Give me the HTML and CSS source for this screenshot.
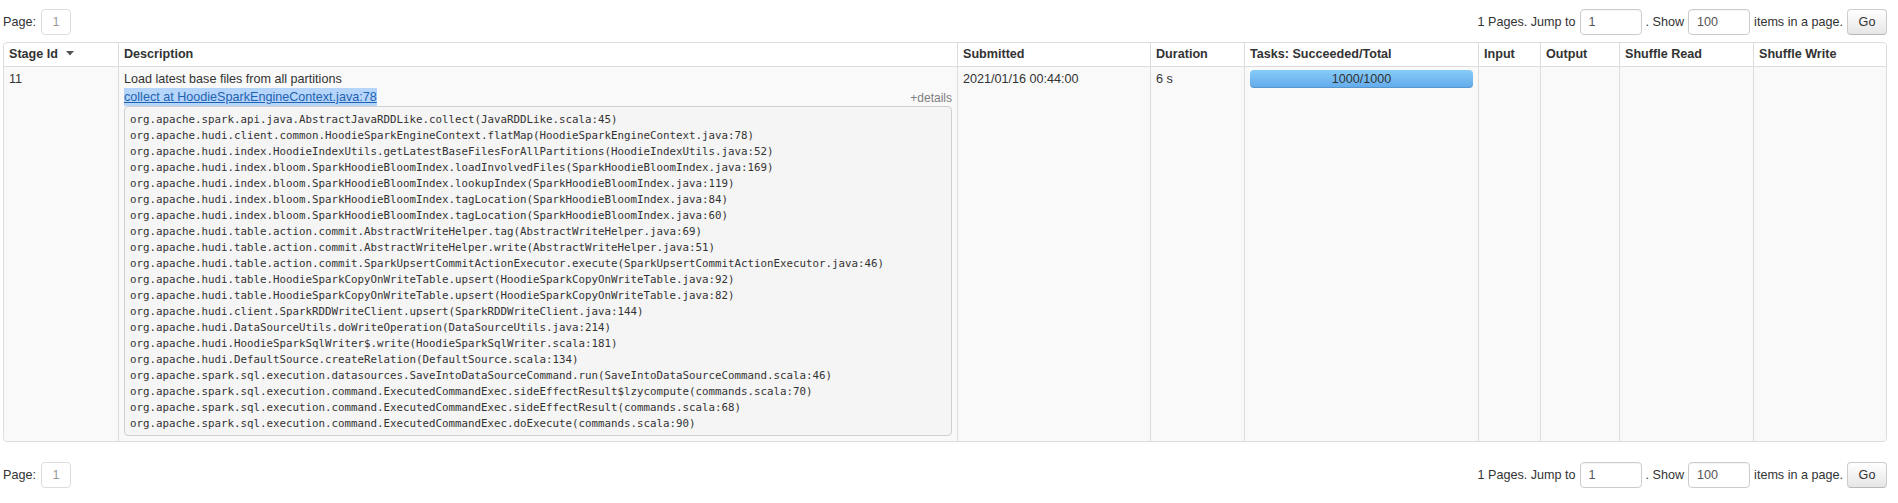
FILE: index.html
```html
<!DOCTYPE html>
<html>
<head>
<meta charset="utf-8">
<title>Stages</title>
<link rel="stylesheet" href="styles.css">
</head>
<body>
<div class="page">
  <div class="pager pager-top">
    <div class="pager-left">
      <span>Page:</span>
      <span class="page-box">1</span>
    </div>
    <div class="pager-right">
      <span>1 Pages. Jump to</span>
      <span class="field">1</span>
      <span>. Show</span>
      <span class="field">100</span>
      <span>items in a page.</span>
      <span class="btn">Go</span>
    </div>
  </div>

  <table class="stages">
    <colgroup>
      <col class="c-id"><col class="c-desc"><col class="c-sub"><col class="c-dur"><col class="c-tasks"><col class="c-in"><col class="c-out"><col class="c-sr"><col class="c-sw">
    </colgroup>
    <thead>
      <tr>
        <th>Stage Id <svg class="sort" width="8" height="5" viewBox="0 0 8 5"><polygon points="0,0 8,0 4,4.5" fill="#555"/></svg></th>
        <th>Description</th>
        <th>Submitted</th>
        <th>Duration</th>
        <th>Tasks: Succeeded/Total</th>
        <th>Input</th>
        <th>Output</th>
        <th>Shuffle Read</th>
        <th>Shuffle Write</th>
      </tr>
    </thead>
    <tbody>
      <tr>
        <td>11</td>
        <td>
          <div class="desc-text">Load latest base files from all partitions</div>
          <div class="desc-link-line"><a class="name-link" href="#">collect at HoodieSparkEngineContext.java:78</a><span class="details">+details</span></div>
          <pre class="trace">org.apache.spark.api.java.AbstractJavaRDDLike.collect(JavaRDDLike.scala:45)
org.apache.hudi.client.common.HoodieSparkEngineContext.flatMap(HoodieSparkEngineContext.java:78)
org.apache.hudi.index.HoodieIndexUtils.getLatestBaseFilesForAllPartitions(HoodieIndexUtils.java:52)
org.apache.hudi.index.bloom.SparkHoodieBloomIndex.loadInvolvedFiles(SparkHoodieBloomIndex.java:169)
org.apache.hudi.index.bloom.SparkHoodieBloomIndex.lookupIndex(SparkHoodieBloomIndex.java:119)
org.apache.hudi.index.bloom.SparkHoodieBloomIndex.tagLocation(SparkHoodieBloomIndex.java:84)
org.apache.hudi.index.bloom.SparkHoodieBloomIndex.tagLocation(SparkHoodieBloomIndex.java:60)
org.apache.hudi.table.action.commit.AbstractWriteHelper.tag(AbstractWriteHelper.java:69)
org.apache.hudi.table.action.commit.AbstractWriteHelper.write(AbstractWriteHelper.java:51)
org.apache.hudi.table.action.commit.SparkUpsertCommitActionExecutor.execute(SparkUpsertCommitActionExecutor.java:46)
org.apache.hudi.table.HoodieSparkCopyOnWriteTable.upsert(HoodieSparkCopyOnWriteTable.java:92)
org.apache.hudi.table.HoodieSparkCopyOnWriteTable.upsert(HoodieSparkCopyOnWriteTable.java:82)
org.apache.hudi.client.SparkRDDWriteClient.upsert(SparkRDDWriteClient.java:144)
org.apache.hudi.DataSourceUtils.doWriteOperation(DataSourceUtils.java:214)
org.apache.hudi.HoodieSparkSqlWriter$.write(HoodieSparkSqlWriter.scala:181)
org.apache.hudi.DefaultSource.createRelation(DefaultSource.scala:134)
org.apache.spark.sql.execution.datasources.SaveIntoDataSourceCommand.run(SaveIntoDataSourceCommand.scala:46)
org.apache.spark.sql.execution.command.ExecutedCommandExec.sideEffectResult$lzycompute(commands.scala:70)
org.apache.spark.sql.execution.command.ExecutedCommandExec.sideEffectResult(commands.scala:68)
org.apache.spark.sql.execution.command.ExecutedCommandExec.doExecute(commands.scala:90)</pre>
        </td>
        <td>2021/01/16 00:44:00</td>
        <td>6 s</td>
        <td>
          <div class="progress"><span>1000/1000</span></div>
        </td>
        <td></td>
        <td></td>
        <td></td>
        <td></td>
      </tr>
    </tbody>
  </table>

  <div class="pager pager-bottom">
    <div class="pager-left">
      <span>Page:</span>
      <span class="page-box">1</span>
    </div>
    <div class="pager-right">
      <span>1 Pages. Jump to</span>
      <span class="field">1</span>
      <span>. Show</span>
      <span class="field">100</span>
      <span>items in a page.</span>
      <span class="btn">Go</span>
    </div>
  </div>
</div>
</body>
</html>
```

FILE: styles.css
```css
html, body {
  margin: 0;
  padding: 0;
  background: #fff;
}
body {
  font-family: "Liberation Sans", Arial, sans-serif;
  font-size: 12.6px;
  line-height: 18px;
  color: #333;
}
.page {
  width: 1884px;
  margin-left: 3px;
}
.pager {
  display: flex;
  justify-content: space-between;
  align-items: center;
  height: 26px;
}
.pager-top {
  margin-top: 9px;
}
.pager-bottom {
  margin-top: 20px;
}
.pager-left,
.pager-right {
  display: flex;
  align-items: center;
  height: 26px;
}
.pager-left {
  gap: 5px;
}
.pager-right {
  gap: 4px;
}
.page-box {
  box-sizing: border-box;
  width: 30px;
  height: 26px;
  border: 1px solid #ddd;
  border-radius: 4px;
  color: #999;
  display: flex;
  align-items: center;
  justify-content: center;
}
.field {
  box-sizing: border-box;
  width: 62px;
  height: 26px;
  border: 1px solid #ccc;
  border-radius: 4px;
  padding: 0 8px;
  color: #555;
  display: flex;
  align-items: center;
  box-shadow: inset 0 1px 1px rgba(0,0,0,0.04);
}
.btn {
  box-sizing: border-box;
  width: 40px;
  height: 26px;
  border: 1px solid #ccc;
  border-bottom-color: #b8b8b8;
  border-radius: 4px;
  background: linear-gradient(to bottom, #ffffff, #e6e6e6);
  display: flex;
  align-items: center;
  justify-content: center;
  color: #333;
}
.stages {
  margin-top: 7px;
  width: 100%;
  table-layout: fixed;
  border-collapse: separate;
  border-spacing: 0;
  border: 1px solid #ddd;
  border-radius: 4px;
}
.c-id { width: 114px; }
.c-desc { width: 839px; }
.c-sub { width: 193px; }
.c-dur { width: 94px; }
.c-tasks { width: 234px; }
.c-in { width: 62px; }
.c-out { width: 79px; }
.c-sr { width: 134px; }
.c-sw { width: auto; }
.stages th,
.stages td {
  padding: 3px 5px;
  text-align: left;
  vertical-align: top;
  border-left: 1px solid #ddd;
  line-height: 18px;
}
.stages th {
  padding: 2px 5px 3px;
  font-weight: bold;
  background: #fff;
}
.stages th:first-child,
.stages td:first-child {
  border-left: none;
}
.stages td {
  border-top: 1px solid #ddd;
  background: #f9f9f9;
}
.stages thead th:first-child { border-top-left-radius: 4px; }
.stages thead th:last-child { border-top-right-radius: 4px; }
.stages tbody td:first-child { border-bottom-left-radius: 4px; }
.stages tbody td:last-child { border-bottom-right-radius: 4px; }
.sort {
  margin-left: 5px;
  vertical-align: 2px;
}
.desc-link-line {
  display: flex;
  justify-content: space-between;
  align-items: center;
  height: 18px;
}
.name-link {
  color: #1f62b0;
  text-decoration: underline;
  background: #b5d5fb;
  line-height: 18px;
}
.details {
  font-size: 12px;
  color: #808080;
  line-height: 18px;
  padding-top: 2px;
}
.trace {
  margin: 0 0 2px 0;
  padding: 5px 5px 3px 5px;
  background: #f5f5f5;
  border: 1px solid #d0d0d0;
  border-radius: 4px;
  font-family: "DejaVu Sans Mono", "Liberation Mono", monospace;
  font-size: 10.8px;
  line-height: 16px;
  color: #333;
  white-space: pre;
  overflow: hidden;
}
.progress {
  height: 18px;
  border-radius: 4px;
  background: linear-gradient(to bottom, #86ccf8, #62aaea);
  box-shadow: inset 0 -1px 0 rgba(0,0,0,0.12);
  text-align: center;
  line-height: 18px;
  color: #333;
}
```
